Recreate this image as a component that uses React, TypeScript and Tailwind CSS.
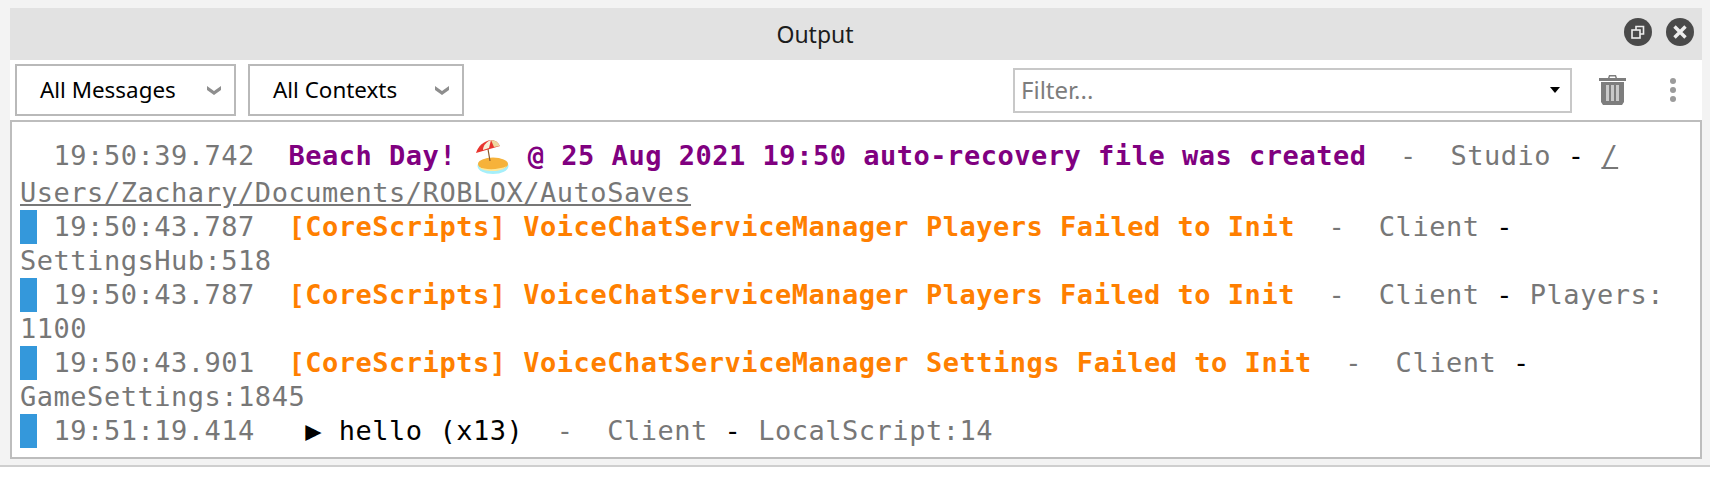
const MONO = "font-['DejaVu_Sans_Mono','Liberation_Mono',monospace]";

type LogRow = {
  time: string;
  message: string;
  context: string;
  sourceStart: string;
  sourceEnd: string;
};

const ROWS: LogRow[] = [
  {
    time: "19:50:43.787",
    message: "[CoreScripts] VoiceChatServiceManager Players Failed to Init",
    context: "Client",
    sourceStart: "",
    sourceEnd: "SettingsHub:518",
  },
  {
    time: "19:50:43.787",
    message: "[CoreScripts] VoiceChatServiceManager Players Failed to Init",
    context: "Client",
    sourceStart: "Players:",
    sourceEnd: "1100",
  },
  {
    time: "19:50:43.901",
    message: "[CoreScripts] VoiceChatServiceManager Settings Failed to Init",
    context: "Client",
    sourceStart: "",
    sourceEnd: "GameSettings:1845",
  },
];

function BeachIcon() {
  return (
    <svg viewBox="-3 -1 38 37" className="inline-block h-[37px] w-[38px] align-top">
      <ellipse cx="17" cy="26" rx="15.500" ry="8" fill="#a5effa" />
      <ellipse cx="17" cy="24" rx="15" ry="6.500" fill="#f6b23a" />
      <path d="M3 27c6 3 20 3 28-1-2 3-8 5-14 5S5 30 3 27z" fill="#fde79a" />
      <path d="M12 9l2 12" stroke="#8a5a2b" strokeWidth="1.200" />
      <path d="M0 13C2 6 8 1 15 0c4 0 7 2 9 6z" fill="#e8352e" />
      <path d="M7 10c0-4 3-8 8-10l-2 8z" fill="#f7f0d8" />
      <path d="M15 0c4 0 7 2 9 6l-6 1z" fill="#ecd9a0" />
    </svg>
  );
}

function Dropdown({ label, width }: { label: string; width: string }) {
  return (
    <div className={`flex h-[52px] items-center justify-between border-2 border-[#b9b9b9] pl-[23px] pr-[12px] ${width}`}>
      <span className="text-[22.4px] text-black">{label}</span>
      <svg viewBox="0 0 16 12" className="h-3 w-4">
        <path d="M1 2l7 5 7-5v4l-7 5-7-5z" fill="#8e8e8e" />
      </svg>
    </div>
  );
}

function Marker() {
  return <span className="inline-block bg-[#3498db]">{"\u00a0"}</span>;
}

function Dash() {
  return <span className="text-black">-</span>;
}

export default function App() {
  return (
    <div className="h-[480px] w-[1710px] overflow-hidden bg-white font-['Noto_Sans',sans-serif]">
      <div className="h-[467px] border-b-2 border-[#cfcfcf] bg-[#f3f3f3] pb-[6px] pl-[10px] pr-2 pt-2">
        <div className="flex h-full flex-col bg-white">
          <div className="relative flex h-[52px] shrink-0 items-center justify-center bg-[#e2e2e2] pr-[82px]">
            <span className="text-[23px] text-[#1c1c1c]">Output</span>
            <div className="absolute right-2 top-[10px] flex gap-[14px]">
              <div className="flex h-7 w-7 items-center justify-center rounded-full bg-[#4a4a4a]">
                <svg viewBox="0 0 16 16" className="h-4 w-4" fill="none" stroke="#eee" strokeWidth="1.6">
                  <rect x="2" y="6" width="8" height="8" />
                  <path d="M6 6V2.500h7.500V10H10" />
                </svg>
              </div>
              <div className="flex h-7 w-7 items-center justify-center rounded-full bg-[#4a4a4a]">
                <svg viewBox="0 0 16 16" className="h-4 w-4" stroke="#eee" strokeWidth="3.4">
                  <path d="M2.500 2.500l11 11M13.500 2.500l-11 11" />
                </svg>
              </div>
            </div>
          </div>
          <div className="flex h-[60px] shrink-0 items-center pl-[5px] pr-[26px]">
            <Dropdown label="All Messages" width="w-[221px]" />
            <div className="w-[12px]" />
            <Dropdown label="All Contexts" width="w-[216px]" />
            <div className="ml-auto flex h-[45px] w-[559px] items-center justify-between border-2 border-[#c8c8c8] pl-[6px] pr-[10px]">
              <span className="text-[24px] text-[#7d7d7d]">Filter...</span>
              <span className="h-0 w-0 border-x-[5px] border-t-[6px] border-x-transparent border-t-black" />
            </div>
            <svg viewBox="0 0 27 30" className="ml-[27px] h-[30px] w-[27px]" fill="#7d7d7d">
              <path d="M10 0h7l1 3h9v3H0V3h9zM11 1.500L10.500 3h6L16 1.500z" fillRule="evenodd" />
              <path d="M2 7h23v20l-2 3H4l-2-3z" />
              <path d="M7 10h3v16H7zM12 10h3v16h-3zM17 10h3v16h-3z" fill="#c9c9c9" />
            </svg>
            <div className="ml-[44px] flex flex-col gap-[3px]">
              <span className="h-[6px] w-[6px] rounded-full bg-[#9b9b9b]" />
              <span className="h-[6px] w-[6px] rounded-full bg-[#9b9b9b]" />
              <span className="h-[6px] w-[6px] rounded-full bg-[#9b9b9b]" />
            </div>
          </div>
          <div className={`min-h-0 flex-1 border-2 border-[#bdbdbd] bg-white px-[8px] pt-[17px] text-[27px] leading-[34px] tracking-[0.52px] text-[#777] ${MONO}`}>
            <div className="whitespace-pre-wrap">
              {"  19:50:39.742  "}
              <b className="text-[#800080]">
                Beach Day! <BeachIcon /> @ 25 Aug 2021 19:50 auto-recovery file was created
              </b>
              {"  -  Studio "}
              <Dash />{" "}
              <span className="underline">
                /<br />
                Users/Zachary/Documents/ROBLOX/AutoSaves
              </span>
            </div>
            {ROWS.map((row, index) => (
              <div key={index} className="whitespace-pre-wrap">
                <Marker />
                {` ${row.time}  `}
                <b className="text-[#ff7f00]">{row.message}</b>
                {`  -  ${row.context} `}
                <Dash />
                {` ${row.sourceStart}`}
                <br />
                {row.sourceEnd}
              </div>
            ))}
            <div className="whitespace-pre-wrap">
              <Marker />
              {" 19:51:19.414   "}
              <span className="text-black">▶ hello (x13)</span>
              {"  -  Client "}
              <Dash />
              {" LocalScript:14"}
            </div>
          </div>
        </div>
      </div>
    </div>
  );
}
